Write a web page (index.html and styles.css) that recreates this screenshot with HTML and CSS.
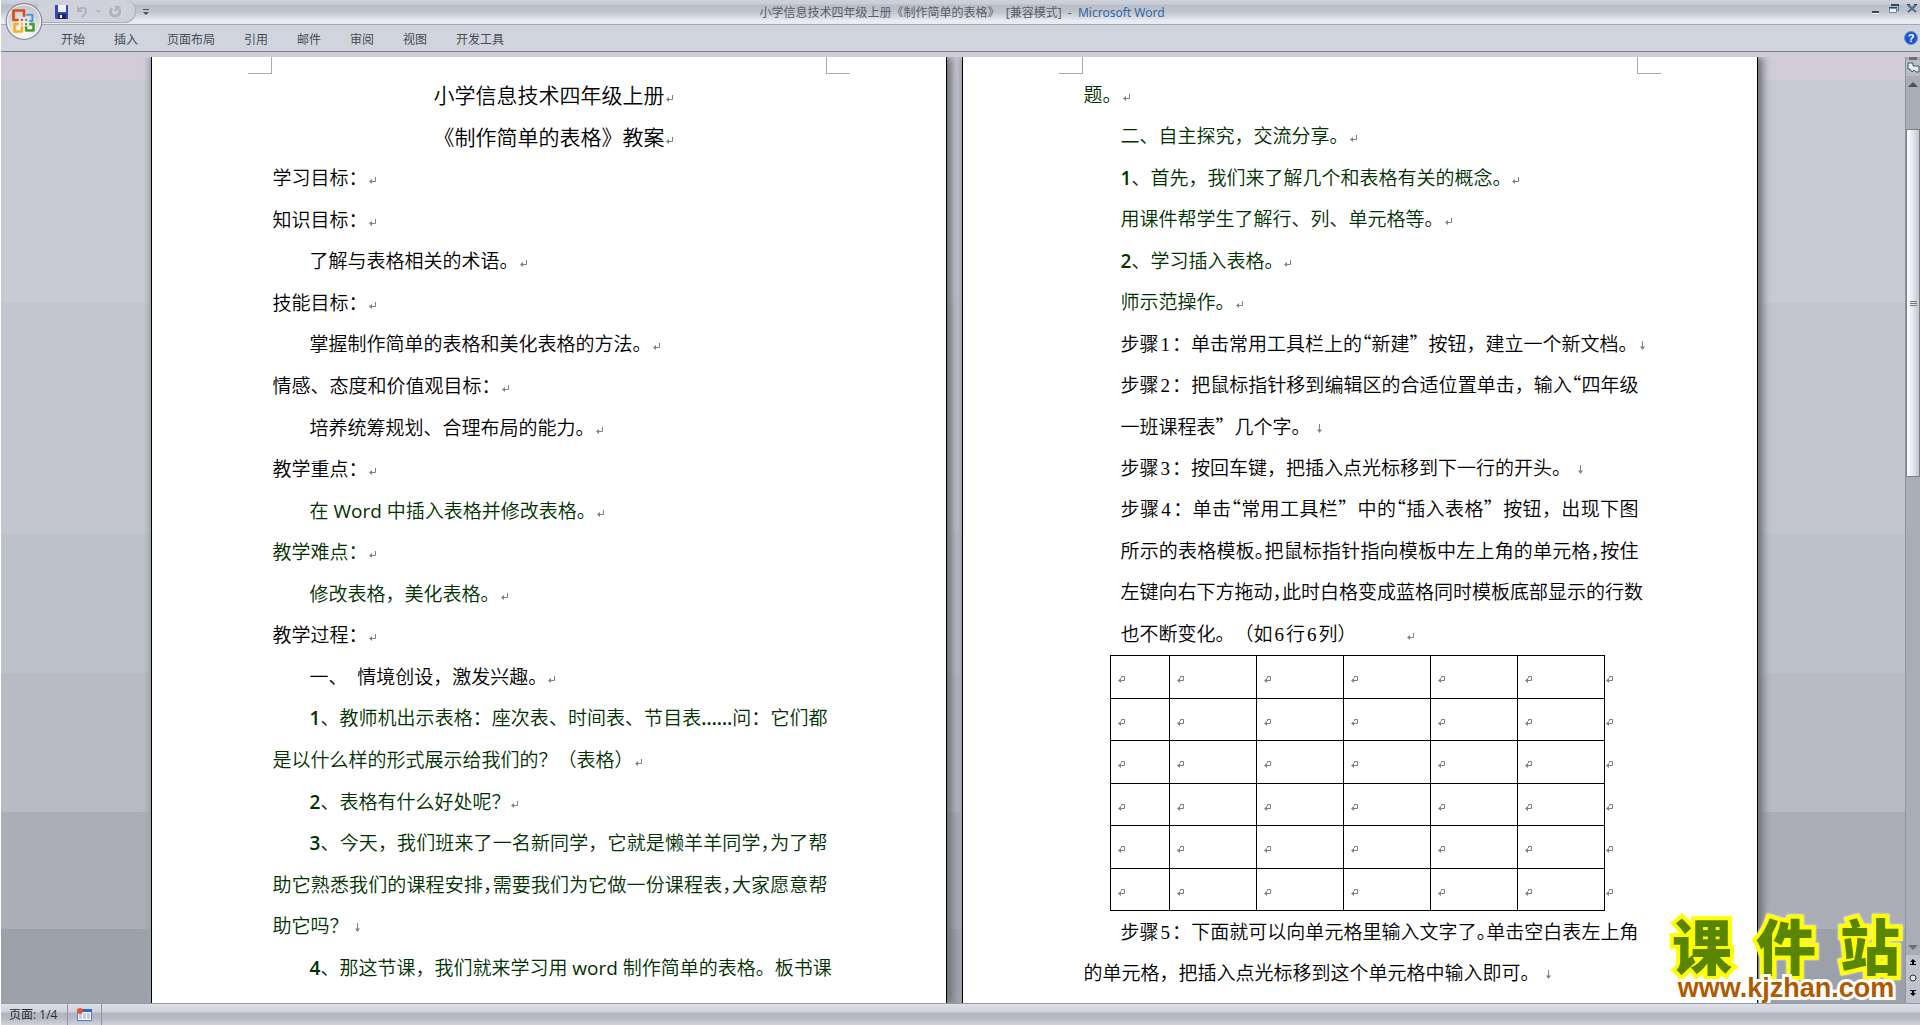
FILE: index.html
```html
<!DOCTYPE html>
<html lang="zh-CN">
<head>
<meta charset="utf-8">
<title>小学信息技术四年级上册《制作简单的表格》 - Microsoft Word</title>
<link rel="stylesheet" href="styles.css">
</head>
<body>
<svg class="defs" aria-hidden="true">
  <symbol id="ret" viewBox="0 0 7 7"><path d="M6.500 0v4.500H2" fill="none" stroke="#808080"/><path d="M0 4.500l3-2.500v5z" fill="#808080"/></symbol>
  <symbol id="down" viewBox="0 0 7 9"><path d="M3.500 0v7" stroke="#808080"/><path d="M1 5.500h5L3.500 9z" fill="#808080"/></symbol>
  <symbol id="cell" viewBox="0 0 7 7"><path d="M3.500 2V.5h3v4H2" fill="none" stroke="#808080"/><path d="M0 4.500l3-2.500v5z" fill="#808080"/></symbol>
</svg>
<div class="app">
  <header class="titlebar">
    <div class="quick">
      <button aria-label="保存"><svg width="13" height="14" viewBox="0 0 13 14"><path d="M0 0h13v14H1l-1-1z" fill="#3a46b4"/><path d="M3 0h8v7H3z" fill="#eef2ff"/><path d="M3 9h8v5H3z" fill="#1c2460"/><path d="M5 10h2v3H5z" fill="#fff"/></svg></button>
      <button aria-label="撤消"><svg width="12" height="12" viewBox="0 0 12 12"><path d="M1 0l6 6H1z" fill="#afb2bb"/><path d="M3 4c2-3 7-3 7 1 0 3-2 4-4 6" fill="none" stroke="#afb2bb" stroke-width="2"/></svg></button>
      <button aria-label="撤消列表"><svg width="5" height="4" viewBox="0 0 5 4"><path d="M0 0h5L2.500 3z" fill="#b5b6b4"/></svg></button>
      <button aria-label="重复"><svg width="12" height="12" viewBox="0 0 12 12"><path d="M3 2c-3 4-1 8 3 8s6-4 4-7" fill="none" stroke="#afb2bb" stroke-width="3"/><path d="M6 0h6l-6 6z" fill="#afb2bb"/></svg></button>
    </div>
    <button class="more" aria-label="自定义"><svg width="6" height="6" viewBox="0 0 6 6"><path d="M0 0h6v1H0zM0 3h6L3 6z" fill="#4c535c"/></svg></button>
    <h1>小学信息技术四年级上册《制作简单的表格》&nbsp; [兼容模式]&nbsp; -&nbsp; <span>Microsoft Word</span></h1>
    <div class="winbtns">
      <button aria-label="最小化"><svg width="10" height="10" viewBox="0 0 10 10"><path d="M1 7h7v2H1z" fill="#2f4a4c"/><path d="M1 9h7v1H1z" fill="#fff"/></svg></button>
      <button aria-label="还原"><svg width="10" height="10" viewBox="0 0 10 10"><path d="M2.500 1.500h7v5h-2" fill="none" stroke="#4b7391"/><path d="M2 0h8v2H2zM0 3h8v2H0z" fill="#2f4a4c"/><path d="M.5 4.500h7v4h-7z" fill="#eef" stroke="#6d8ba6"/></svg></button>
      <button aria-label="关闭"><svg width="10" height="10" viewBox="0 0 10 10"><path d="M1 1l8 7M9 1L1 8" stroke="#4b6b83" stroke-width="2"/><path d="M0 0h3v1H0zM7 0h3v1H7z" fill="#2f4a4c"/></svg></button>
    </div>
  </header>
  <nav class="ribbon">
    <a href="#">开始</a><a href="#">插入</a><a href="#">页面布局</a><a href="#">引用</a><a href="#">邮件</a><a href="#">审阅</a><a href="#">视图</a><a href="#">开发工具</a>
    <button class="help" aria-label="帮助">?</button>
  </nav>
  <button class="office" aria-label="Office 按钮"><svg width="38" height="40" viewBox="0 0 36 38">
    <defs><radialGradient id="orb" cx=".5" cy=".75" r=".7"><stop offset="0" stop-color="#fff"/><stop offset=".6" stop-color="#dcdde0"/><stop offset="1" stop-color="#c2c3c8"/></radialGradient></defs>
    <circle cx="18" cy="19.500" r="17" fill="url(#orb)" stroke="#85868b"/><circle cx="18" cy="19" r="15.500" fill="none" stroke="#f7f7f8"/>
    <g fill="none" stroke-width="2.500" stroke-linejoin="round">
      <path d="M13 18H8V9h10v6" stroke="#dd4a12"/><path d="M20 13h6v6h-3" stroke="#3f9fe0" stroke-width="2"/><path d="M13 22H9v7h7v-5" stroke="#f6b21c"/><path d="M20 24v4h7v-6h-4" stroke="#4d9a35"/>
    </g><path d="M15 17h2v2h-2z" fill="#dd4a12"/><path d="M19 17h2v2h-2z" fill="#3f9fe0"/><path d="M15 21h2v2h-2z" fill="#f6b21c"/><path d="M19 21h2v2h-2z" fill="#4d9a35"/>
  </svg></button>

  <main class="work">
    <div class="desk">
      <article class="sheet first">
        <i class="corner left"></i><i class="corner right"></i>
        <h2>小学信息技术四年级上册<svg class="m"><use href="#ret"/></svg></h2>
        <h2>《制作简单的表格》教案<svg class="m"><use href="#ret"/></svg></h2>
        <p>学习目标：<svg class="m"><use href="#ret"/></svg></p>
        <p>知识目标：<svg class="m"><use href="#ret"/></svg></p>
        <p class="in">了解与表格相关的术语。<svg class="m"><use href="#ret"/></svg></p>
        <p>技能目标：<svg class="m"><use href="#ret"/></svg></p>
        <p class="in">掌握制作简单的表格和美化表格的方法。<svg class="m"><use href="#ret"/></svg></p>
        <p>情感、态度和价值观目标：<svg class="m"><use href="#ret"/></svg></p>
        <p class="in">培养统筹规划、合理布局的能力。<svg class="m"><use href="#ret"/></svg></p>
        <p>教学重点：<svg class="m"><use href="#ret"/></svg></p>
        <p class="in green">在 <b class="word">Word</b> 中插入表格并修改表格。<svg class="m"><use href="#ret"/></svg></p>
        <p class="green">教学难点：<svg class="m"><use href="#ret"/></svg></p>
        <p class="in green">修改表格，美化表格。<svg class="m"><use href="#ret"/></svg></p>
        <p>教学过程：<svg class="m"><use href="#ret"/></svg></p>
        <p class="in">一、&nbsp; 情境创设，激发兴趣。<svg class="m"><use href="#ret"/></svg></p>
        <p class="in green full"><b>1</b>、教师机出示表格：座次表、时间表、节目表<b>……</b>问：它们都</p>
        <p class="green">是以什么样的形式展示给我们的？（表格）<svg class="m"><use href="#ret"/></svg></p>
        <p class="in green"><b>2</b>、表格有什么好处呢？<svg class="m"><use href="#ret"/></svg></p>
        <p class="in green full"><b>3</b>、今天，我们班来了一名新同学，它就是懒羊羊同学<span class="half">，</span>为了帮</p>
        <p class="green full">助它熟悉我们的课程安排<span class="half">，</span>需要我们为它做一份课程表<span class="half">，</span>大家愿意帮</p>
        <p class="green">助它吗？ <svg class="m d"><use href="#down"/></svg></p>
        <p class="in green full"><b>4</b>、那这节课，我们就来学习用 <b class="word">word</b> 制作简单的表格。板书课</p>
      </article>
      <article class="sheet second">
        <i class="corner left"></i><i class="corner right"></i>
        <p class="green">题。<svg class="m"><use href="#ret"/></svg></p>
        <p class="in green">二、自主探究，交流分享。<svg class="m"><use href="#ret"/></svg></p>
        <p class="in green"><b>1</b>、首先，我们来了解几个和表格有关的概念。<svg class="m"><use href="#ret"/></svg></p>
        <p class="in green">用课件帮学生了解行、列、单元格等。<svg class="m"><use href="#ret"/></svg></p>
        <p class="in green"><b>2</b>、学习插入表格。<svg class="m"><use href="#ret"/></svg></p>
        <p class="in green">师示范操作。<svg class="m"><use href="#ret"/></svg></p>
        <p class="in">步骤<span class="n">1</span>：单击常用工具栏上的<span class="half">“</span>新建<span class="wide">”</span>按钮，建立一个新文档。<svg class="m d"><use href="#down"/></svg></p>
        <p class="in full">步骤<span class="n">2</span>：把鼠标指针移到编辑区的合适位置单击，输入<span class="half">“</span>四年级</p>
        <p class="in">一班课程表<span class="wide">”</span>几个字。 <svg class="m d"><use href="#down"/></svg></p>
        <p class="in">步骤<span class="n">3</span>：按回车键，把插入点光标移到下一行的开头。 <svg class="m d"><use href="#down"/></svg></p>
        <p class="in full">步骤<span class="n">4</span>：单击<span class="half">“</span>常用工具栏<span class="wide">”</span>中的<span class="half">“</span>插入表格<span class="wide">”</span>按钮，出现下图</p>
        <p class="in full">所示的表格模板<span class="half">。</span>把鼠标指针指向模板中左上角的单元格<span class="half">，</span>按住</p>
        <p class="in full">左键向右下方拖动<span class="half">，</span>此时白格变成蓝格同时模板底部显示的行数</p>
        <p class="in">也不断变化。（如<span class="n">6</span>行<span class="n">6</span>列）<svg class="m far"><use href="#ret"/></svg></p>
        <table>
          <colgroup><col class="c1"><col span="5" class="c2"><col class="c3"></colgroup>
          <tbody id="rows"></tbody>
        </table>
        <p class="in full">步骤<span class="n">5</span>：下面就可以向单元格里输入文字了<span class="half">。</span>单击空白表左上角</p>
        <p>的单元格，把插入点光标移到这个单元格中输入即可。 <svg class="m d"><use href="#down"/></svg></p>
      </article>
      <div class="mark"><strong>课件站</strong><a href="#">www.kjzhan.com</a></div>
    </div>
    <aside class="scroll">
      <span class="split"></span>
      <button class="ruler" aria-label="标尺"><svg width="13" height="12" viewBox="0 0 13 12"><path d="M1 1h5v3h6v6H9L7 8 5 10 3 7H1z" fill="#e8eef2" stroke="#40596a"/></svg></button>
      <button aria-label="向上"><svg width="10" height="5" viewBox="0 0 10 5"><path d="M5 0l5 5H0z" fill="#4c5058"/></svg></button>
      <div class="track"><div class="thumb"><i></i><i></i><i></i></div></div>
      <button aria-label="向下"><svg width="10" height="5" viewBox="0 0 10 5"><path d="M0 0h10L5 5z" fill="#6a6e78"/></svg></button>
      <div class="browse">
        <button aria-label="前一页"><svg width="6" height="7" viewBox="0 0 6 7"><path d="M3 0l3 3H0zM2 3h2v2H2zM0 5h6v1H0z"/></svg></button>
        <button aria-label="选择浏览对象"><svg width="8" height="8" viewBox="0 0 8 8"><circle cx="4" cy="4" r="3" fill="#e4e4e8" stroke="#333"/></svg></button>
        <button aria-label="下一页"><svg width="6" height="7" viewBox="0 0 6 7"><path d="M0 0h6v1H0zM2 1h2v2H2zM0 3h6L3 6z"/></svg></button>
      </div>
    </aside>
  </main>
  <footer class="status">
    <span class="cell page">页面: 1/4</span>
    <span class="cell icon"><svg width="15" height="13" viewBox="0 0 15 13"><path d="M.5 1.500h14v11H.5z" fill="#fff" stroke="#5874b8"/><path d="M1 1h14v3H1z" fill="#3c63c0"/><path d="M2 6h3M6 6h3M10 6h3M2 8h3M6 8h3M10 8h3M2 10h3M6 10h3M10 10h3" stroke="#7c9bdb"/><circle cx="3" cy="3" r="3" fill="#e0573a"/></svg></span>
  </footer>
</div>
<script src="table.js"></script>
</body>
</html>
```
FILE: table.js
```js
const mark = '<svg class="m"><use href="#cell"/></svg>';
const row = '<tr>' + ('<td>' + mark + '</td>').repeat(6) + '<td class="end">' + mark + '</td></tr>';
document.getElementById('rows').innerHTML = row.repeat(6);
```
FILE: styles.css
```css
* { box-sizing: border-box; }
body { margin: 0; font-family: "Noto Sans CJK SC", sans-serif; color: #000; }
button { border: 0; padding: 0; background: none; display: grid; place-items: center; }
a { text-decoration: none; color: inherit; }
h1, h2, p { margin: 0; font-weight: 400; }
svg { display: block; flex: none; }
.defs { position: absolute; width: 0; height: 0; }

.app { position: relative; display: flex; flex-direction: column; min-height: 100vh; border-left: 1px solid #fff; }

.titlebar { display: flex; height: 24px; align-items: center; background: linear-gradient(#cdd1da 0, #c9cdd5 4px, #babec8 5px, #c0c4cc 12px, #d2d6dd 16px, #dfe2e9 19px, #e8ebf3 20px, #e8ebf3 24px); padding-right: 1px; }
.quick { display: flex; align-items: center; gap: 8px; width: 98px; height: 23px; margin-left: 37px; padding: 2px 0 0 17px; align-self: flex-start; border: 1px solid #aaaeb9; border-width: 0 1px 1px 0; border-radius: 0 12px 12px 0; background: #cfd2da; }
.more { margin-left: 7px; }
h1 { flex: 1; text-align: center; font: 12px/24px "Noto Sans", "Noto Sans CJK SC", sans-serif; color: #5a5d66; padding: 1px 96px 0 0; white-space: nowrap; }
h1 span { color: #3267a8; }
.winbtns { display: flex; gap: 8px; align-self: flex-start; padding: 4px 2px 0 0; }

.ribbon { display: flex; align-items: center; gap: 29px; height: 28px; padding: 0 2px 0 60px; background: #d0d4dd; border-top: 1px solid #a6a9b3; border-bottom: 1px solid #7e7f85; font-size: 12px; color: #454b55; }
.help { width: 14px; height: 14px; margin-left: auto; border: 1px solid #6a8fd8; border-radius: 50%; background: #1c54cf; color: #fff; font: bold 11px/12px "Liberation Sans", sans-serif; }
.office { position: absolute; left: 4px; top: 1px; }

.work { flex: 1; display: flex; border-top: 5px solid #d0cdd8; background: linear-gradient(#d0cdd8 2.4%, #c8cbd4 2.4% 26%, #c3c6cf 26% 50.4%, #bdc2ca 50.4% 65.1%, #b8bbc4 65.1% 79.8%, #abaeb7 79.8% 92.2%, #9ca0a9 92.2%); }
.desk { position: relative; flex: 1; display: flex; justify-content: center; gap: 15px; padding-left: 2px; overflow: hidden; }
.sheet { position: relative; display: flex; flex-direction: column; justify-content: space-between; width: 796px; background: #fff; border: 1px solid #000; border-width: 0 1px; padding: 18px 118px 14px 121px; box-shadow: 5px 0 8px #6c6f76, -3px 0 5px #a4a8b4; }
.sheet.second { padding-bottom: 9px; }
.corner { position: absolute; top: 0; width: 24px; height: 17px; border: 1px solid #a9abb8; border-top: 0; }
.corner.left { left: 96px; border-left: 0; }
.corner.right { right: 96px; border-right: 0; }

h2, p { height: 41px; font: 350 19px/41px "Open Sans", "Noto Sans CJK SC", sans-serif; white-space: nowrap; text-spacing-trim: space-all; }
h2 { font-size: 21px; text-align: center; padding-left: 6px; }
.in { padding-left: 37px; }
.full { text-align: justify; text-align-last: justify; }
.green { color: #003000; }
b { font-weight: 600; }
.word { font-weight: 500; }
.n { font: 19px/1px "Liberation Serif", serif; padding: 0 2px; }
.half, .wide { font-family: "Noto Sans CJK SC", sans-serif; line-height: 1px; }
.half { font-feature-settings: "halt"; }
.m { display: inline-block; width: 7px; height: 7px; margin-left: 1px; vertical-align: 1px; }
.m.d { height: 9px; }
.m.far { margin-left: 50px; }

table { border-collapse: collapse; table-layout: fixed; width: 510px; height: 256px; margin-left: 26px; flex: none; }
.c1 { width: 59px; } .c2 { width: 87px; } .c3 { width: 16px; }
td { border: 1px solid #000; padding: 6px 0 0 7px; line-height: 7px; }
td .m { display: block; margin-left: 0; }
td.end { border: 0; border-left: 1px solid #000; padding-left: 1px; }

.mark { position: absolute; right: 5px; bottom: 0; width: 228px; display: flex; flex-direction: column; }
.mark strong { font: 900 60px/58px "Noto Sans CJK SC", sans-serif; color: #5a8500; text-align-last: justify; -webkit-text-stroke: 8px #ffff00; paint-order: stroke fill; filter: drop-shadow(0 0 1px #fff); }
.mark a { position: relative; font: bold 27px/30px "Liberation Sans", sans-serif; color: #b05a00; text-align: center; -webkit-text-stroke: 6px #fff; paint-order: stroke fill; }

.scroll { display: flex; flex-direction: column; align-items: center; width: 15px; background: #a9adb6; border-left: 1px solid #90939b; }
.split { width: 8px; height: 3px; background: #6b6d73; }
.ruler { width: 14px; height: 18px; background: #b9bdc6; }
.scroll > button { height: 16px; }
.track { flex: 1; align-self: stretch; padding-top: 37px; }
.thumb { height: 43%; display: flex; flex-direction: column; justify-content: center; align-items: center; gap: 1px; background: linear-gradient(90deg, #fff, #e5e7ee 50%, #c2c5cf); border: 1px solid #7d8088; }
.thumb i { width: 7px; height: 1px; background: #777; }
.browse { display: flex; flex-direction: column; align-items: center; gap: 8px; height: 48px; padding-top: 4px; align-self: stretch; background: #c0c3cd; }

.status { display: flex; height: 22px; border-top: 1px solid #989ba4; background: linear-gradient(#dcdfe6, #ced1d9 8px, #b2b5bf 9px, #b6b9c3 14px, #cfd2db); }
.cell { display: flex; align-items: center; border-right: 1px solid #92959e; font: 12px/20px "Open Sans", "Noto Sans CJK SC", sans-serif; color: #2c2c30; }
.page { width: 67px; padding-left: 8px; }
.icon { width: 34px; padding-left: 9px; }
```
